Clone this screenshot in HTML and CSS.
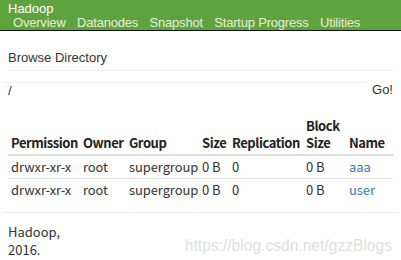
FILE: index.html
```html
<!DOCTYPE html>
<html lang="en">
<head>
  <meta charset="UTF-8" />
  <title>Browsing HDFS</title>
  <link rel="stylesheet" href="styles.css">
</head>
<body>
  <header class="navbar">
    <div class="brand">Hadoop</div>
    <nav>
      <a href="#">Overview</a>
      <a href="#">Datanodes</a>
      <a href="#">Snapshot</a>
      <a href="#">Startup Progress</a>
      <a href="#">Utilities</a>
    </nav>
  </header>
  <main>
    <div class="page-header">Browse Directory</div>
    <form class="dir-form">
      <input type="text" class="dir-input" value="/" />
      <button type="button" class="go">Go!</button>
    </form>
    <table class="files">
      <colgroup>
        <col style="width:72px"><col style="width:46px"><col style="width:73px"><col style="width:30px"><col style="width:74px"><col style="width:43px"><col>
      </colgroup>
      <thead>
        <tr>
          <th>Permission</th><th>Owner</th><th>Group</th><th>Size</th><th>Replication</th><th>Block Size</th><th>Name</th>
        </tr>
      </thead>
      <tbody>
        <tr>
          <td>drwxr-xr-x</td><td>root</td><td>supergroup</td><td>0 B</td><td>0</td><td>0 B</td><td><a href="#">aaa</a></td>
        </tr>
        <tr>
          <td>drwxr-xr-x</td><td>root</td><td>supergroup</td><td>0 B</td><td>0</td><td>0 B</td><td><a href="#">user</a></td>
        </tr>
      </tbody>
    </table>
    <hr class="foot-rule">
    <footer>Hadoop,<br>2016.</footer>
    <div class="watermark">https://blog.csdn.net/gzzBlogs</div>
  </main>
</body>
</html>
```

FILE: styles.css
```css
body {
  margin: 0; font-family: "Noto Sans CJK SC", "Noto Sans", sans-serif; font-size: 13px;
  color: #333; background: #fff;
}
.navbar {
  background: #5fa33e; border-bottom: 1px solid #111; height: 30px;
  padding-left: 8px; font-family: "Liberation Sans", Arial, sans-serif;
}
.brand {
  color: #fff; padding-top: 0.5px; height: 15px; line-height: 15px;
}
.navbar nav {
  padding-left: 5px; white-space: nowrap; height: 14.5px; line-height: 14.5px;
  letter-spacing: -0.2px;
}
.navbar nav a {
  color: #e4efd9; text-decoration: none; margin-right: 8px;
}
main {
  position: relative; padding: 0 8px;
}
.page-header {
  font-family: "Liberation Sans", Arial, sans-serif; padding-top: 17px; height: 22px;
  border-bottom: 1px solid #eee; line-height: 20px;
}
.dir-form {
  display: flex; margin: 11px -5px 0; height: 27px;
}
.dir-input {
  flex: 1; border: 0; border-top: 1px solid #f0f0f0; padding: 0 5px 1px;
  font-family: "Liberation Sans", Arial, sans-serif; font-size: 13px; color: #333;
  height: 15px; outline: none;
}
.go {
  background: none; border: 0; padding: 0 5px 0 6px; height: 16px; margin-top: -1px;
  font-family: "Liberation Sans", Arial, sans-serif; font-size: 13px; color: #333;
}
.files {
  width: 100%; border-collapse: collapse; table-layout: fixed; margin-top: 8px;
}
.files th {
  text-align: left; vertical-align: bottom; font-weight: bold; color: #222;
  padding: 0 3px 3px; line-height: 17px; border-bottom: 2px solid #ddd;
  letter-spacing: -0.45px; white-space: normal;
}
.files td {
  padding: 2px 3px 3px; line-height: 17px; border-top: 1px solid #ddd;
  white-space: nowrap; letter-spacing: -0.1px;
}
.files tbody tr:first-child td {
  border-top: 0;
}
.files a {
  color: #3a78c0; text-decoration: none;
}
.foot-rule {
  border: 0; border-top: 1px solid #eee; margin: 11px -5px 0;
}
footer {
  padding-top: 10px; line-height: 18px;
}
.watermark {
  position: absolute; right: 9px; bottom: 4px;
  font-family: "Liberation Sans", Arial, sans-serif; font-size: 15.6px; color: #e0e0e0;
}
```
